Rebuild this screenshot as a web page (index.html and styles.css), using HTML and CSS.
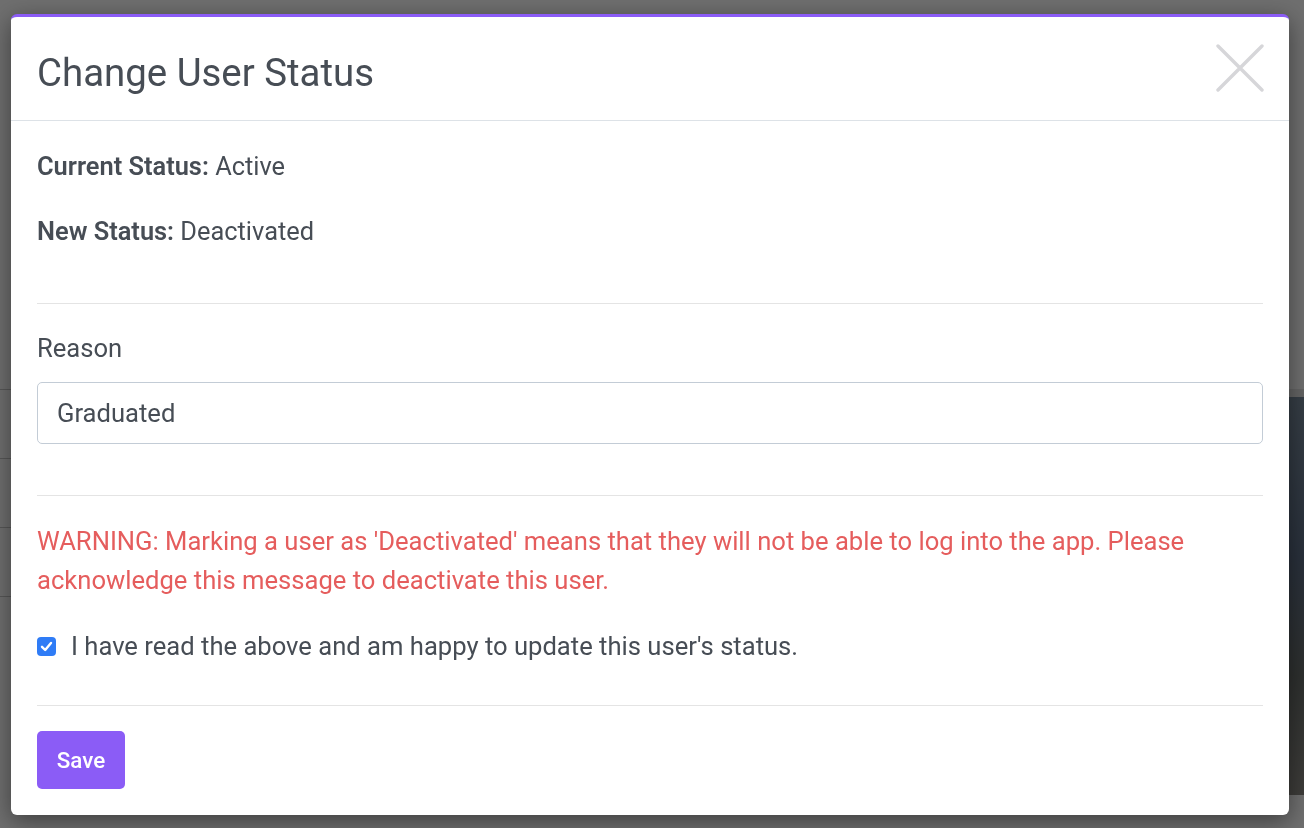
FILE: index.html
```html
<!DOCTYPE html>
<html lang="en">
<head>
<meta charset="utf-8">
<title>Change User Status</title>
<link rel="stylesheet" href="styles.css">
</head>
<body>
<div class="page">
  <div class="page-table">
    <div class="page-row"></div>
    <div class="page-row"><span class="page-cell">Graduated</span></div>
    <div class="page-row"></div>
    <div class="page-row"></div>
  </div>
  <div class="page-photo"></div>
</div>

<div class="backdrop">
  <div class="modal">
    <div class="modal-header">
      <h2 class="modal-title">Change User Status</h2>
      <button class="close" type="button" aria-label="Close">
        <svg width="50" height="50" viewBox="0 0 50 50"><path d="M3 3 L47 47 M47 3 L3 47" stroke="#d6d6d9" stroke-width="3.4" stroke-linecap="round" fill="none"/></svg>
      </button>
    </div>
    <div class="modal-body">
      <p class="status first"><strong>Current Status:</strong> Active</p>
      <p class="status"><strong>New Status:</strong> Deactivated</p>
      <hr class="rule rule-1">
      <label class="field-label">Reason</label>
      <div class="input">Graduated</div>
      <hr class="rule rule-2">
      <p class="warning">WARNING: Marking a user as 'Deactivated' means that they will not be able to log into the app. Please acknowledge this message to deactivate this user.</p>
      <div class="check-row">
        <span class="checkbox"><svg width="13" height="13" viewBox="0 0 13 13"><path d="M2 6.8 L5.2 10 L11 3" stroke="#fff" stroke-width="2.4" fill="none" stroke-linecap="round" stroke-linejoin="round"/></svg></span>
        <span class="check-label">I have read the above and am happy to update this user's status.</span>
      </div>
      <hr class="rule rule-3">
      <button class="btn-save" type="button">Save</button>
    </div>
  </div>
</div>
</body>
</html>
```

FILE: styles.css
```css
* { box-sizing: border-box; }
html, body { margin: 0; padding: 0; }
body {
  width: 1304px;
  height: 828px;
  overflow: hidden;
  font-family: Roboto, "Liberation Sans", Arial, sans-serif;
  background: #ffffff;
  color: #474d55;
}

/* page behind the overlay */
.page {
  display: flex;
  padding-top: 389px;
  height: 828px;
}
.page-table {
  width: 200px;
}
.page-row {
  height: 69px;
  border-top: 1px solid #c8c8c8;
  position: relative;
}
.page-cell {
  position: absolute;
  right: -2px;
  top: 16px;
  font-size: 25px;
  color: #333;
  direction: rtl;
}
.page-photo {
  margin-left: auto;
  width: 30px;
  height: 406px;
  border-top: 8px solid #e6e6e6;
  background: linear-gradient(180deg, #7c8ea0 0%, #5f7089 40%, #6a6f6c 70%, #8e8c86 100%);
}

/* overlay + modal */
.backdrop {
  position: fixed;
  inset: 0;
  background: rgba(0, 0, 0, 0.57);
  padding: 14px 15px 0 11px;
}
.modal {
  background: #fff;
  border-top: 3px solid #8b5cf6;
  border-radius: 6px;
  box-shadow: 0 6px 24px rgba(0, 0, 0, 0.45);
}
.modal-header {
  height: 104px;
  border-bottom: 1px solid #dde2e7;
  display: flex;
  align-items: center;
  justify-content: space-between;
  padding: 10px 24px 2px 26px;
}
.modal-title {
  margin: 0;
  font-size: 38.4px;
  font-weight: 400;
  color: #474d55;
  line-height: 46px;
}
.close {
  border: 0;
  background: none;
  padding: 0;
  width: 50px;
  height: 50px;
  display: flex;
  margin-top: -10px;
}
.modal-body {
  padding: 0 26px 26px;
}
.status {
  margin: 35px 0 0;
  font-size: 25.4px;
  line-height: 30px;
}
.status.first { margin-top: 30px; }
.status strong { font-weight: 600; }
.rule {
  border: 0;
  border-top: 1px solid #e4e4e4;
  margin: 0;
}
.rule-1 { margin-top: 57px; }
.field-label {
  display: block;
  margin-top: 29px;
  font-size: 25.6px;
  line-height: 30px;
}
.input {
  margin-top: 19px;
  height: 62px;
  border: 1px solid #c3ccd6;
  border-radius: 5px;
  padding: 0 19px;
  display: flex;
  align-items: center;
  font-size: 25.6px;
  color: #474d55;
}
.rule-2 { margin-top: 51px; }
.warning {
  margin: 26px 0 0;
  color: #e55d5d;
  font-size: 25.6px;
  line-height: 39px;
}
.check-row {
  margin-top: 31px;
  height: 30px;
  display: flex;
  align-items: center;
}
.checkbox {
  width: 19px;
  height: 19px;
  border-radius: 4px;
  background: #2f7cf6;
  display: flex;
  align-items: center;
  justify-content: center;
  margin-right: 15px;
}
.check-label {
  font-size: 25.6px;
  line-height: 30px;
}
.rule-3 { margin-top: 44px; }
.btn-save {
  margin-top: 25px;
  width: 88px;
  height: 58px;
  border: 0;
  border-radius: 5px;
  background: #8b5cf6;
  color: #fff;
  font-family: Roboto, "Liberation Sans", Arial, sans-serif;
  font-size: 22.4px;
  font-weight: 500;
  padding: 0;
}
```
